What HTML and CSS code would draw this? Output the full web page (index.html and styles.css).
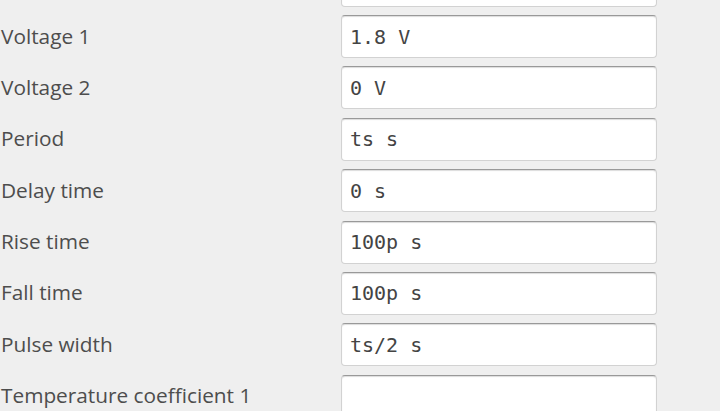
FILE: index.html
```html
<!DOCTYPE html>
<html>
<head>
<meta charset="utf-8">
<link rel="stylesheet" href="styles.css">
</head>
<body>
<form class="form">
  <span class="label"></span>
  <input class="field" type="text" value="" aria-label="Previous value">
  <label class="label" for="f1">Voltage 1</label>
  <input class="field" id="f1" type="text" value="1.8 V">
  <label class="label" for="f2">Voltage 2</label>
  <input class="field" id="f2" type="text" value="0 V">
  <label class="label" for="f3">Period</label>
  <input class="field" id="f3" type="text" value="ts s">
  <label class="label" for="f4">Delay time</label>
  <input class="field" id="f4" type="text" value="0 s">
  <label class="label" for="f5">Rise time</label>
  <input class="field" id="f5" type="text" value="100p s">
  <label class="label" for="f6">Fall time</label>
  <input class="field" id="f6" type="text" value="100p s">
  <label class="label" for="f7">Pulse width</label>
  <input class="field" id="f7" type="text" value="ts/2 s">
  <label class="label" for="f8">Temperature coefficient 1</label>
  <input class="field" id="f8" type="text" value="">
</form>
</body>
</html>
```

FILE: styles.css
```css
html, body {
  margin: 0;
  padding: 0;
  background: #efefef;
  overflow: hidden;
}

.form {
  display: grid;
  grid-template-columns: 341px 316px;
  grid-auto-rows: 43px;
  row-gap: 8.4px;
  margin-top: -36.4px;
}

.label {
  display: flex;
  align-items: center;
  padding-left: 1px;
  padding-bottom: 2px;
  font-family: "Open Sans", "Noto Sans", sans-serif;
  font-size: 20.8px;
  color: #4d4d4d;
}

.field {
  box-sizing: border-box;
  width: 316px;
  height: 43px;
  margin: 0;
  padding: 0 8px;
  background: #ffffff;
  border: 1px solid #d2d2d2;
  border-top-color: #999999;
  border-radius: 4px;
  box-shadow: inset 0 1px 1px rgba(0, 0, 0, 0.14);
  font-family: "DejaVu Sans Mono", "Liberation Mono", monospace;
  font-size: 20px;
  color: #444444;
  outline: none;
}
```
